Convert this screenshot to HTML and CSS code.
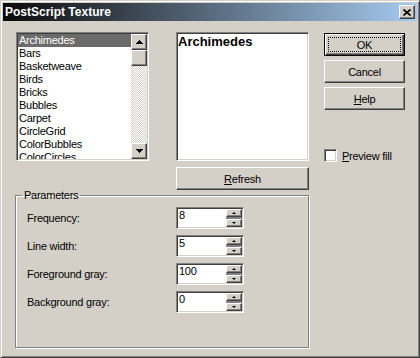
FILE: index.html
```html
<!DOCTYPE html>
<html lang="en">
  <head>
    <meta charset="UTF-8" />
    <title>PostScript Texture</title>
    <link rel="stylesheet" href="styles.css">
  </head>
  <body>
    <div class="window">
      <div class="titlebar">
        <span class="title">PostScript Texture</span>
        <button class="close" type="button">
          <svg width="8" height="7" viewBox="0 0 8 7">
            <path d="M0.5 0.5L7.5 6.5M7.5 0.5L0.5 6.5" stroke="#000" stroke-width="1.6" fill="none" />
          </svg>
        </button>
      </div>

      <div class="client">
        <div class="main">
          <div class="top">
            <div class="listbox">
              <ul class="items">
                <li class="selected">Archimedes</li>
                <li>Bars</li>
                <li>Basketweave</li>
                <li>Birds</li>
                <li>Bricks</li>
                <li>Bubbles</li>
                <li>Carpet</li>
                <li>CircleGrid</li>
                <li>ColorBubbles</li>
                <li>ColorCircles</li>
              </ul>
              <div class="scrollbar">
                <div class="sb-btn">
                  <svg width="7" height="4" viewBox="0 0 7 4" shape-rendering="crispEdges">
                    <rect x="3" y="0" width="1" height="1" />
                    <rect x="2" y="1" width="3" height="1" />
                    <rect x="1" y="2" width="5" height="1" />
                    <rect x="0" y="3" width="7" height="1" />
                  </svg>
                </div>
                <div class="sb-track">
                  <div class="sb-thumb"></div>
                </div>
                <div class="sb-btn">
                  <svg width="7" height="4" viewBox="0 0 7 4" shape-rendering="crispEdges">
                    <rect x="0" y="0" width="7" height="1" />
                    <rect x="1" y="1" width="5" height="1" />
                    <rect x="2" y="2" width="3" height="1" />
                    <rect x="3" y="3" width="1" height="1" />
                  </svg>
                </div>
              </div>
            </div>
            <div class="preview">Archimedes</div>
          </div>

          <div class="refresh-row">
            <button class="btn refresh" type="button"><u>R</u>efresh</button>
          </div>

          <fieldset class="params">
            <legend>Parameters</legend>
            <div class="param-rows">
              <div class="row">
                <span class="param-label">Frequency:</span>
                <div class="spin">
                  <span class="spin-value">8</span>
                  <div class="spin-btns">
                    <div class="spin-btn"><span class="arrow-up"></span></div>
                    <div class="spin-btn"><span class="arrow-down"></span></div>
                  </div>
                </div>
              </div>
              <div class="row">
                <span class="param-label">Line width:</span>
                <div class="spin">
                  <span class="spin-value">5</span>
                  <div class="spin-btns">
                    <div class="spin-btn"><span class="arrow-up"></span></div>
                    <div class="spin-btn"><span class="arrow-down"></span></div>
                  </div>
                </div>
              </div>
              <div class="row">
                <span class="param-label">Foreground gray:</span>
                <div class="spin">
                  <span class="spin-value">100</span>
                  <div class="spin-btns">
                    <div class="spin-btn"><span class="arrow-up"></span></div>
                    <div class="spin-btn"><span class="arrow-down"></span></div>
                  </div>
                </div>
              </div>
              <div class="row">
                <span class="param-label">Background gray:</span>
                <div class="spin">
                  <span class="spin-value">0</span>
                  <div class="spin-btns">
                    <div class="spin-btn"><span class="arrow-up"></span></div>
                    <div class="spin-btn"><span class="arrow-down"></span></div>
                  </div>
                </div>
              </div>
            </div>
          </fieldset>
        </div>

        <div class="side">
          <button class="btn default" type="button"><span class="focus">OK</span></button>
          <button class="btn" type="button">Cancel</button>
          <button class="btn" type="button"><u>H</u>elp</button>
          <label class="check">
            <span class="check-box"></span>
            <span><u>P</u>review fill</span>
          </label>
        </div>
      </div>
    </div>
  </body>
</html>
```

FILE: styles.css
```css
body {
  margin: 0;
  font-family: "Liberation Sans", Arial, sans-serif;
  font-size: 11px;
  letter-spacing: -0.25px;
  color: #000;
  background: #d4d0c8;
}
.window {
  width: 420px;
  height: 358px;
  box-sizing: border-box;
  border: 1px solid;
  border-color: #d4d0c8 #404040 #404040 #d4d0c8;
  box-shadow: inset 1px 1px #fff, inset -1px -1px #808080;
  padding: 2px;
  background: #d4d0c8;
  display: flex;
  flex-direction: column;
}
.titlebar {
  height: 18px;
  display: flex;
  align-items: center;
  justify-content: space-between;
  padding: 0 2px;
  background: linear-gradient(to right, #0a0a0a, #a6caf0);
  color: #fff;
}
.title {
  font-weight: bold;
  font-size: 12px;
  letter-spacing: 0;
}
.close {
  width: 16px;
  height: 14px;
  box-sizing: border-box;
  padding: 0;
  display: flex;
  align-items: center;
  justify-content: center;
  background: #d4d0c8;
  border: 1px solid;
  border-color: #fff #404040 #404040 #fff;
  box-shadow: inset -1px -1px #808080;
}

/* raised / sunken 3d edges */
.btn,
.sb-btn,
.sb-thumb,
.spin-btn {
  box-sizing: border-box;
  background: #d4d0c8;
  border: 1px solid;
  border-color: #fff #404040 #404040 #fff;
  box-shadow: inset -1px -1px #808080;
}
.listbox,
.preview,
.spin,
.check-box {
  box-sizing: border-box;
  background: #fff;
  border: 1px solid;
  border-color: #808080 #fff #fff #808080;
  box-shadow: inset 1px 1px #404040, inset -1px -1px #d4d0c8;
  padding: 1px;
}

.client {
  display: flex;
  gap: 15px;
  padding: 11px 0 0 12px;
}
.main {
  width: 294px;
}
.top {
  display: flex;
  gap: 27px;
  margin-left: 1px;
  height: 129px;
}
.listbox {
  width: 133px;
  height: 129px;
  display: flex;
}
.items {
  list-style: none;
  margin: 0;
  padding: 0;
  flex: 1;
  overflow: hidden;
}
.items li {
  height: 13px;
  line-height: 13px;
  padding-left: 1px;
  white-space: nowrap;
}
.items .selected {
  background: #6b6b6b;
  color: #fff;
}
.scrollbar {
  width: 16px;
  display: flex;
  flex-direction: column;
}
.sb-btn {
  height: 16px;
  display: flex;
  align-items: center;
  justify-content: center;
}
.sb-track {
  flex: 1;
  background: repeating-conic-gradient(#fff 0 25%, #d4d0c8 0 50%) 0 0 / 2px 2px;
}
.sb-thumb {
  height: 16px;
}
.preview {
  width: 133px;
  height: 129px;
  font-weight: bold;
  font-size: 13px;
  line-height: 15px;
  letter-spacing: 0;
}

.refresh-row {
  display: flex;
  justify-content: flex-end;
  margin-top: 6px;
}
.btn {
  height: 23px;
  padding: 0;
  font-family: inherit;
  font-size: 11px;
  letter-spacing: -0.25px;
  color: #000;
  display: flex;
  align-items: center;
  justify-content: center;
}
.refresh {
  width: 133px;
}

.params {
  margin: 0;
  padding: 0;
  width: 294px;
  height: 158px;
  min-inline-size: 0;
  box-sizing: border-box;
  border: 1px solid #808080;
  box-shadow: 1px 1px #fff, inset 1px 1px #fff;
}
.params legend {
  margin-left: 6px;
  padding: 0 2px;
  line-height: 11px;
  height: 11px;
}
.param-rows {
  padding: 5px 0 0 11px;
  display: flex;
  flex-direction: column;
  gap: 5px;
}
.row {
  display: flex;
  align-items: center;
  height: 23px;
}
.param-label {
  width: 149px;
}
.spin {
  width: 68px;
  height: 22px;
  display: flex;
}
.spin-value {
  flex: 1;
  padding-left: 1px;
  line-height: 13px;
}
.spin-btns {
  width: 16px;
  display: flex;
  flex-direction: column;
  justify-content: space-between;
  background: #808080;
}
.spin-btn {
  height: 8px;
  display: flex;
  align-items: center;
  justify-content: center;
}
.arrow-up,
.arrow-down {
  width: 0;
  height: 0;
  border-left: 2px solid transparent;
  border-right: 2px solid transparent;
}
.arrow-up {
  border-bottom: 2px solid #000;
}
.arrow-down {
  border-top: 2px solid #000;
}

.side {
  width: 81px;
  display: flex;
  flex-direction: column;
  gap: 4px;
  padding-top: 1px;
}
.btn.default {
  border-color: #000;
  box-shadow: inset 1px 1px #fff, inset -1px -1px #404040, inset -2px -2px #808080;
  padding: 3px;
  align-items: stretch;
}
.focus {
  flex: 1;
  border: 1px dotted #000;
  display: flex;
  align-items: center;
  justify-content: center;
}
.check {
  display: flex;
  align-items: center;
  gap: 5px;
  margin-top: 35px;
}
.check-box {
  width: 13px;
  height: 13px;
}
```
